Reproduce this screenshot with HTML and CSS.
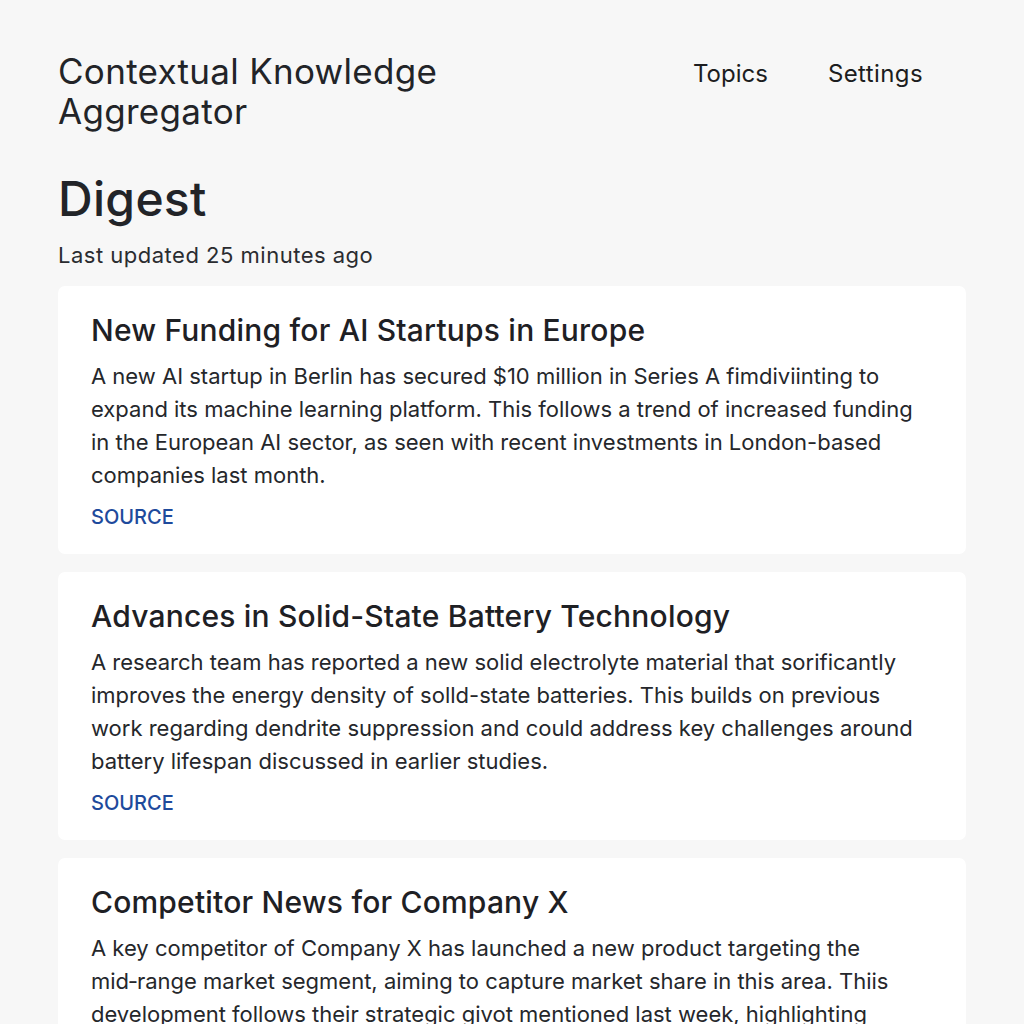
FILE: index.html
```html
<!DOCTYPE html>
<html lang="en">
<head>
<meta charset="utf-8">
<title>Contextual Knowledge Aggregator</title>
<link rel="stylesheet" href="styles.css">
</head>
<body>
<div class="page">
  <header class="topbar">
    <div class="brand">Contextual Knowledge<br>Aggregator</div>
    <nav class="nav">
      <a class="nav-link" href="#">Topics</a>
      <a class="nav-link" href="#">Settings</a>
    </nav>
  </header>
  <section class="intro">
    <h1 class="page-title">Digest</h1>
    <p class="updated">Last updated 25 minutes ago</p>
  </section>
  <main class="feed">
    <article class="card">
      <h2 class="card-title">New Funding for AI Startups in Europe</h2>
      <p class="card-body">A new AI startup in Berlin has secured $10 million in Series A fimdiviinting to expand its machine learning platform. This follows a trend of increased funding in the European AI sector, as seen with recent investments in London-based companies last month.</p>
      <a class="source" href="#">SOURCE</a>
    </article>
    <article class="card">
      <h2 class="card-title">Advances in Solid-State Battery Technology</h2>
      <p class="card-body">A research team has reported a new solid electrolyte material that sorificantly improves the energy density of solld-state batteries. This builds on previous work regarding dendrite suppression and could address key challenges around battery lifespan discussed in earlier studies.</p>
      <a class="source" href="#">SOURCE</a>
    </article>
    <article class="card">
      <h2 class="card-title">Competitor News for Company X</h2>
      <p class="card-body">A key competitor of Company X has launched a new product targeting the mid&#8209;range market segment, aiming to capture market share in this area. Thiis development follows their strategic givot mentioned last week, highlighting their focus on expanding reach.</p>
      <a class="source" href="#">SOURCE</a>
    </article>
  </main>
</div>
</body>
</html>
```
FILE: styles.css
```css
* { box-sizing: border-box; }
html, body {
  margin: 0;
  padding: 0;
  background: #f7f7f7;
}
body {
  font-family: Inter, "Liberation Sans", Arial, sans-serif;
  color: #222428;
}
.page {
  padding: 51px 58px 40px 58px;
}
.topbar {
  display: flex;
  justify-content: space-between;
  align-items: flex-start;
}
.brand {
  font-size: 35px;
  line-height: 40px;
  font-weight: 400;
  color: #222428;
  letter-spacing: 0.3px;
}
.nav {
  display: flex;
  gap: 60px;
  margin-top: 7px;
  margin-right: 43px;
}
.nav-link {
  font-size: 24px;
  line-height: 32px;
  color: #1c1d20;
  text-decoration: none;
}
.nav-link + .nav-link {
  letter-spacing: 0.4px;
}
.intro {
  margin-top: 40px;
}
.page-title {
  margin: 0;
  font-size: 48px;
  line-height: 56px;
  font-weight: 500;
  color: #222428;
  letter-spacing: 0.3px;
}
.updated {
  margin: 14px 0 0 0;
  font-size: 22px;
  line-height: 28px;
  color: #2a2c30;
  letter-spacing: 0.5px;
}
.feed {
  margin-top: 17px;
  display: flex;
  flex-direction: column;
  gap: 18px;
}
.card {
  background: #ffffff;
  border-radius: 7px;
  padding: 25px 48px 25px 33px;
}
.card-title {
  margin: 0;
  font-size: 30px;
  line-height: 38px;
  font-weight: 500;
  color: #1e2024;
  letter-spacing: 0.2px;
}
.card-body {
  margin: 11px 0 0 0;
  font-size: 22px;
  line-height: 33px;
  color: #25272b;
}
.source {
  display: block;
  margin-top: 13px;
  font-size: 20px;
  line-height: 24px;
  font-weight: 500;
  color: #1e4a9c;
  text-decoration: none;
}
```
